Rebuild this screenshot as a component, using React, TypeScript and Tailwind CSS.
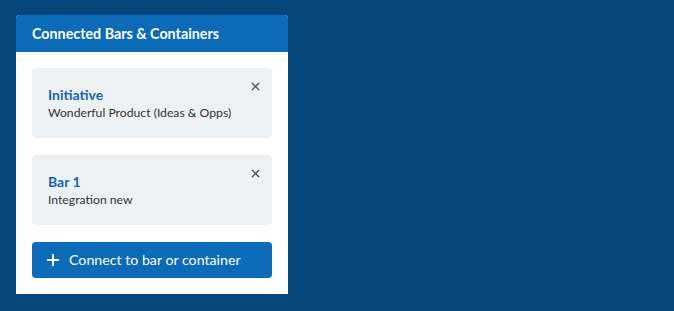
import { Plus, X } from "lucide-react";

const items = [
  { title: "Initiative", subtitle: "Wonderful Product (Ideas & Opps)" },
  { title: "Bar 1", subtitle: "Integration new" },
];

export default function App() {
  return (
    <div className="min-h-screen bg-[#05477a] p-4 pt-[15px] font-['Lato',sans-serif]">
      <div className="w-[272px] overflow-hidden rounded-t bg-white">
        <div className="flex h-[37px] items-center bg-[#0b6bb8] px-4 text-[14.3px] font-bold text-white">
          Connected Bars &amp; Containers
        </div>
        <div className="flex flex-col gap-[17px] p-4">
          {items.map((item) => (
            <div
              key={item.title}
              className="relative flex h-[70px] flex-col justify-center rounded bg-[#eef1f4] px-4"
            >
              <div className="-mt-px text-[14px] font-bold leading-5 text-[#1565b0]">
                {item.title}
              </div>
              <div className="text-[12.2px] leading-4 text-[#333]">
                {item.subtitle}
              </div>
              <button className="absolute right-[10px] top-[12px] text-[#555]">
                <X size={13} strokeWidth={2.5} />
              </button>
            </div>
          ))}
          <button className="flex h-9 items-center gap-[7px] rounded bg-[#0b6bb8] pl-3 text-[14.2px] text-white">
            <Plus size={18} strokeWidth={2.6} />
            Connect to bar or container
          </button>
        </div>
      </div>
    </div>
  );
}
